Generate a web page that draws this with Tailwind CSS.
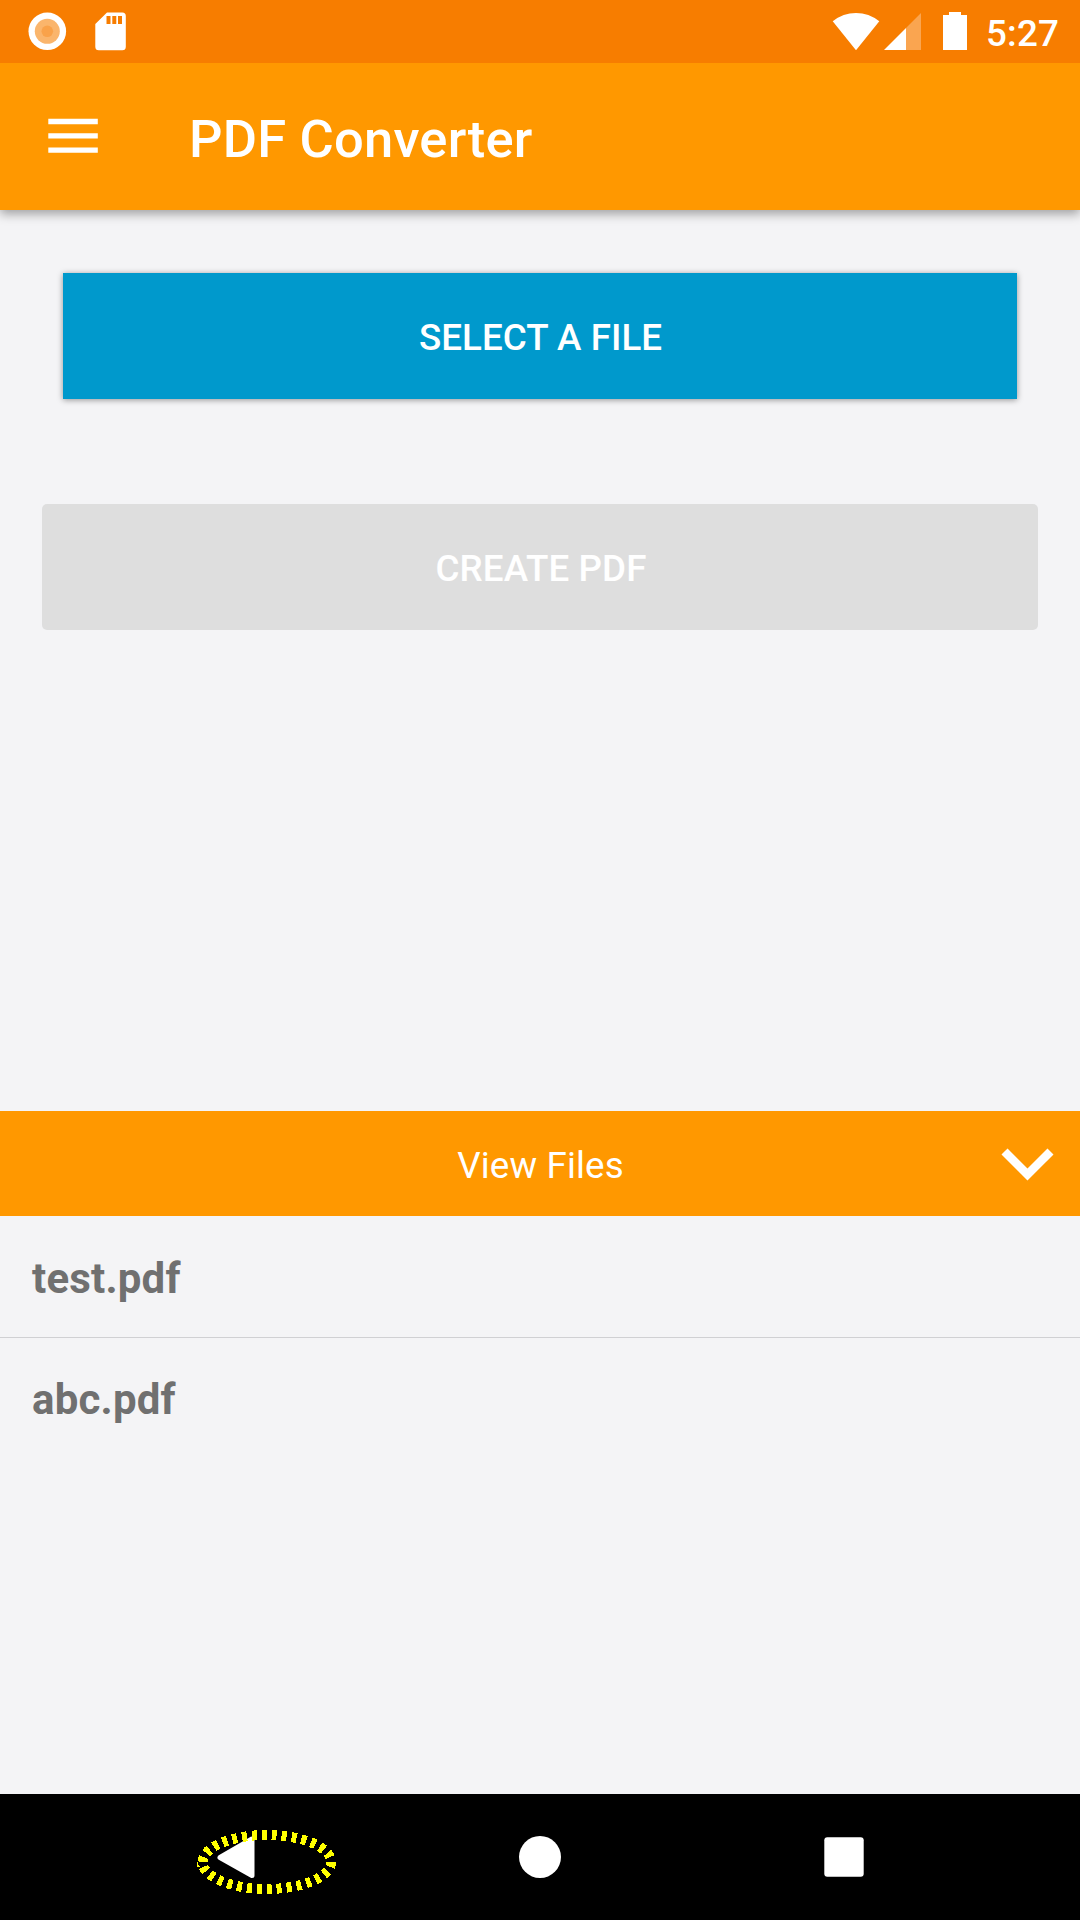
<!DOCTYPE html>
<html lang="en">
<head>
<meta charset="utf-8">
<title>PDF Converter</title>
<script src="https://cdn.jsdelivr.net/npm/@tailwindcss/browser@4"></script>
</head>
<body class="overflow-hidden">
<div class="flex h-[1920px] w-[1080px] flex-col bg-[#f4f4f6] font-['Roboto',sans-serif]">
  <!-- Status bar -->
  <div class="z-20 flex h-[63px] shrink-0 items-start justify-between bg-[#f77d00] text-white">
    <svg class="h-[63px] w-[140px]" viewBox="0 0 140 63">
      <circle cx="47.3" cy="31.3" r="18.8" fill="#fff"/>
      <circle cx="47.3" cy="31.3" r="12.5" fill="#fab56c"/>
      <circle cx="47.3" cy="31.3" r="5.8" fill="#f9a24a"/>
      <path fill="#fff" fill-rule="evenodd" d="M107 12.5h15.300a3.500 3.500 0 0 1 3.500 3.500v30.800a3.500 3.500 0 0 1-3.500 3.500h-23.500a3.500 3.500 0 0 1-3.500-3.500v-22.800zM106.500 16v8h4v-8zM112.300 16v8h4v-8zM118 16v8h4v-8z"/>
    </svg>
    <div class="flex items-start">
      <svg class="h-[63px] w-[150px]" viewBox="820 0 150 63" fill="#fff">
        <path d="M832.700 21.300Q843 13 856 13T879.300 21.300L856 50.200z"/>
        <path d="M884 50L906 28V50z"/>
        <path d="M921 13V50H906V28z" fill="#faa550"/>
        <path d="M943 15h6v-3h12v3h6v35h-24z"/>
      </svg>
      <span class="w-[110px] pt-[2px] pl-[16px] text-[36.75px] leading-[63px] font-medium tracking-[0.2px]">5:27</span>
    </div>
  </div>

  <!-- App bar -->
  <header class="z-10 flex h-[147px] shrink-0 items-center bg-[#ff9800] text-white shadow-[0_4px_10px_rgba(0,0,0,0.35)]">
    <svg class="h-[147px] w-[189px]" viewBox="0 63 189 147" fill="#fff"><path d="M48.300 118.800h49.500v5.400h-49.500zM48.300 133.200h49.500v5.300h-49.500zM48.300 147.400h49.500v5.400h-49.500z"/></svg>
    <h1 class="pt-[5px] text-[52.5px] font-medium tracking-[0.2px]">PDF Converter</h1>
  </header>

  <!-- Actions -->
  <main class="flex h-[901px] shrink-0 flex-col px-[42px] pt-[63px]">
    <button class="mx-[21px] h-[126px] bg-[#0099cc] pt-[3px] pl-px text-[36.75px] font-medium tracking-[0.05px] text-white shadow-[0_1px_6px_rgba(0,0,0,0.4)]">SELECT A FILE</button>
    <button class="mt-[105px] h-[126px] rounded-[5px] bg-[#dedede] pt-[3px] pl-[2px] text-[36.75px] font-medium tracking-[0.1px] text-white">CREATE PDF</button>
  </main>

  <!-- Bottom sheet -->
  <section class="flex h-[683px] shrink-0 flex-col">
    <div class="grid h-[105px] shrink-0 grid-cols-[105px_1fr_105px] items-center bg-[#ff9800] text-white">
      <span></span>
      <span class="pt-[4px] pl-px text-center text-[36.75px] tracking-[0.15px]">View Files</span>
      <svg class="h-[105px] w-[105px]" viewBox="975 1111 105 105"><path d="M1004.500 1151.500L1027.500 1174.500L1050.500 1151.500" fill="none" stroke="#fff" stroke-width="8.500"/></svg>
    </div>
    <ul class="text-[42px] font-bold tracking-[0.18px] text-[#707070]">
      <li class="flex h-[122px] items-center border-b border-[#d0d0d3] px-8 pt-[4px]">test.pdf</li>
      <li class="flex h-[121px] items-center px-8 pt-[1px]">abc.pdf</li>
    </ul>
  </section>

  <!-- Navigation bar -->
  <nav class="h-[126px] shrink-0 bg-black">
    <svg class="block h-[126px] w-[1080px]" viewBox="0 1794 1080 126">
      <path d="M220 1857.500L252 1839V1875.500z" fill="#fff" stroke="#fff" stroke-width="5" stroke-linejoin="round"/>
      <ellipse cx="266.800" cy="1862" rx="64.300" ry="27" pathLength="300" fill="none" stroke="#ff0" stroke-width="10" stroke-dasharray="5 5" shape-rendering="crispEdges"/>
      <circle cx="540" cy="1857" r="21" fill="#fff"/>
      <rect x="824.300" y="1837.300" width="39.400" height="39.400" rx="3" fill="#fff"/>
    </svg>
  </nav>
</div>
</body>
</html>
